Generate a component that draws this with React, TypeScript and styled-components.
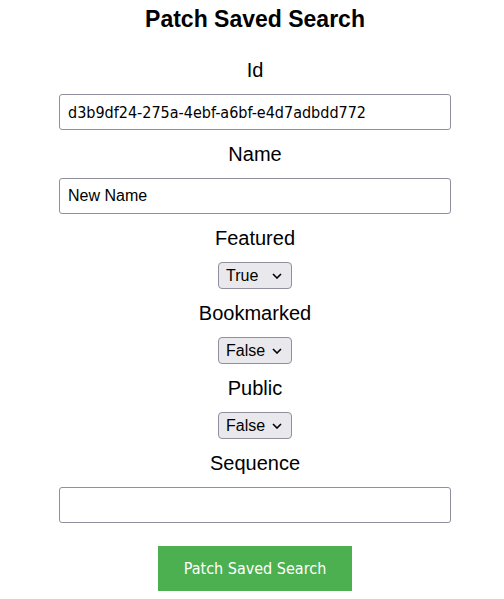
import React, { useState } from "react";
import styled, { createGlobalStyle } from "styled-components";

const GlobalStyle = createGlobalStyle`
  html, body {
    margin: 0;
    padding: 0;
    background: #ffffff;
    font-family: "Liberation Sans", Arial, sans-serif;
    color: #000000;
  }
`;

const Page = styled.div`
  width: 392px;
  margin-left: 59px;
  display: flex;
  flex-direction: column;
  align-items: center;
  padding-top: 7px;
`;

const Title = styled.h2`
  margin: 0 0 26px 0;
  font-size: 23px;
  line-height: 25px;
  font-weight: bold;
`;

const Form = styled.form`
  width: 100%;
  display: flex;
  flex-direction: column;
  align-items: center;
  gap: 12px;
`;

const Label = styled.label`
  display: block;
  font-size: 20px;
  line-height: 24px;
  text-align: center;
`;

const TextInput = styled.input<{ $condensed?: boolean }>`
  box-sizing: border-box;
  width: 100%;
  height: 36px;
  padding: 0 8px;
  border: 1px solid #8f8f9d;
  border-radius: 3px;
  font-family: ${(p) =>
    p.$condensed
      ? `"DejaVu Sans Condensed", "DejaVu Sans", sans-serif`
      : `"Liberation Sans", Arial, sans-serif`};
  font-size: 16px;
  color: #000000;
  background: #ffffff;
  outline: none;
`;

const Select = styled.select`
  box-sizing: border-box;
  width: 74px;
  height: 27px;
  padding: 0 24px 0 7px;
  border: 1px solid #8f8f9d;
  border-radius: 4px;
  background-color: #e9e9ed;
  background-image: url("data:image/svg+xml;utf8,<svg xmlns='http://www.w3.org/2000/svg' width='10' height='6' viewBox='0 0 10 6'><path d='M1 1l4 4 4-4' fill='none' stroke='black' stroke-width='1.6'/></svg>");
  background-repeat: no-repeat;
  background-position: right 9px center;
  appearance: none;
  font-family: "Liberation Sans", Arial, sans-serif;
  font-size: 16px;
  color: #000000;
`;

const SubmitButton = styled.button`
  margin-top: 11px;
  width: 194px;
  height: 45px;
  border: none;
  border-radius: 0;
  background: #4caf50;
  color: #ffffff;
  font-family: "DejaVu Sans Condensed", "DejaVu Sans", sans-serif;
  font-size: 16px;
  cursor: pointer;
`;

export default function App() {
  const [id, setId] = useState("d3b9df24-275a-4ebf-a6bf-e4d7adbdd772");
  const [name, setName] = useState("New Name");
  const [featured, setFeatured] = useState("true");
  const [bookmarked, setBookmarked] = useState("false");
  const [isPublic, setIsPublic] = useState("false");
  const [sequence, setSequence] = useState("");

  return (
    <>
      <GlobalStyle />
      <Page>
        <Title>Patch Saved Search</Title>
        <Form onSubmit={(e) => e.preventDefault()}>
          <Label htmlFor="id">Id</Label>
          <TextInput $condensed id="id" value={id} onChange={(e) => setId(e.target.value)} />
          <Label htmlFor="name">Name</Label>
          <TextInput id="name" value={name} onChange={(e) => setName(e.target.value)} />
          <Label htmlFor="featured">Featured</Label>
          <Select id="featured" value={featured} onChange={(e) => setFeatured(e.target.value)}>
            <option value="true">True</option>
            <option value="false">False</option>
          </Select>
          <Label htmlFor="bookmarked">Bookmarked</Label>
          <Select id="bookmarked" value={bookmarked} onChange={(e) => setBookmarked(e.target.value)}>
            <option value="true">True</option>
            <option value="false">False</option>
          </Select>
          <Label htmlFor="public">Public</Label>
          <Select id="public" value={isPublic} onChange={(e) => setIsPublic(e.target.value)}>
            <option value="true">True</option>
            <option value="false">False</option>
          </Select>
          <Label htmlFor="sequence">Sequence</Label>
          <TextInput id="sequence" value={sequence} onChange={(e) => setSequence(e.target.value)} />
          <SubmitButton type="submit">Patch Saved Search</SubmitButton>
        </Form>
      </Page>
    </>
  );
}
